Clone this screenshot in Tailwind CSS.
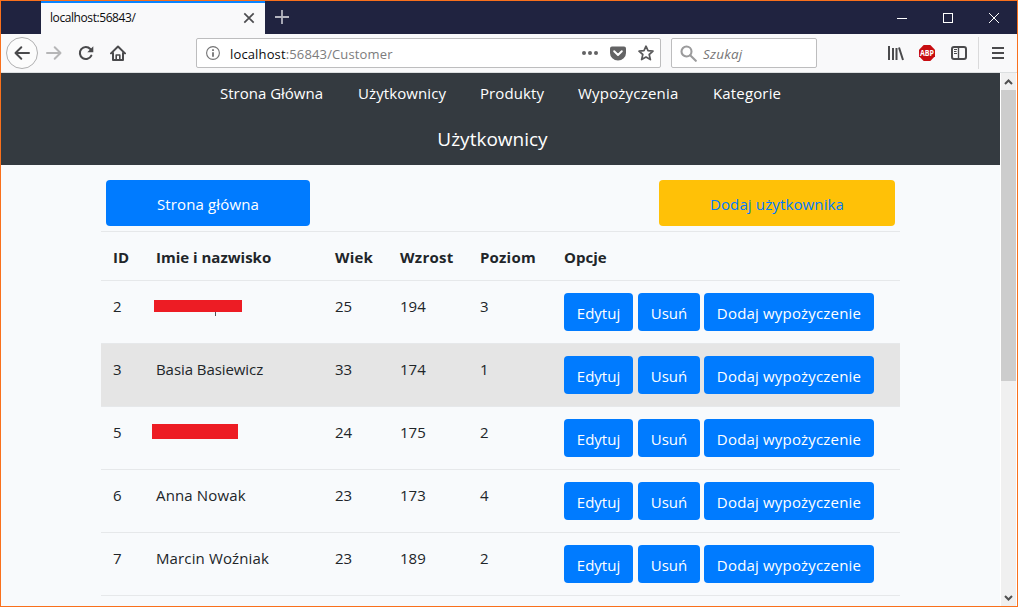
<!DOCTYPE html>
<html lang="pl">
<head>
<meta charset="utf-8">
<title>Użytkownicy</title>
<script src="https://cdn.jsdelivr.net/npm/@tailwindcss/browser@4"></script>
</head>
<body class="w-[1018px] h-[607px] overflow-hidden font-['Open_Sans',sans-serif]">
<div class="w-[1018px] h-[607px] border border-[#f9701c] flex flex-col overflow-hidden bg-[#f8fafc]">
  <!-- title bar -->
  <div class="h-[33px] shrink-0 bg-[#202340] flex">
    <div class="ml-[40px] w-[224px] h-full bg-[#f9f9fa] border-t-2 border-[#0a84ff] flex items-center pl-[9px] pr-[10px] justify-between">
      <span class="-mt-px text-[12px] tracking-[-0.42px] leading-4 text-[#0c0c0d] whitespace-nowrap">localhost:56843/</span>
      <svg class="-mt-px" width="12" height="12" viewBox="0 0 12 12" fill="none" stroke="#4c4c4f" stroke-width="1.7"><path d="M1.3 1.3l9.4 9.4M10.7 1.3l-9.4 9.4"/></svg>
    </div>
    <svg class="ml-[10px] mt-[9px]" width="14" height="14" viewBox="0 0 14 14" stroke="#b4b5c0" stroke-width="1.8"><path d="M7 0v14M0 7h14"/></svg>
    <div class="ml-auto flex items-start gap-[36px] pt-[12px] pr-[18px]">
      <svg width="10" height="10" stroke="#fff" shape-rendering="crispEdges"><path d="M0 5.5h10"/></svg>
      <svg width="10" height="10" fill="none" stroke="#fff" shape-rendering="crispEdges"><path d="M.5.5h9v9h-9z"/></svg>
      <svg width="10" height="10" fill="none" stroke="#fff"><path d="M0 0l10 10M10 0L0 10"/></svg>
    </div>
  </div>
  <!-- toolbar -->
  <div class="h-[39px] shrink-0 bg-[#f9f9fa] border-b border-[#dcdfe0] flex items-center">
    <div class="ml-[5px] size-8 rounded-full border border-[#b0b0b1] bg-[#fcfcfc] flex items-center justify-center">
      <svg width="16" height="16" viewBox="0 0 16 16" fill="none" stroke="#4a4a4c" stroke-width="2" stroke-linecap="round" stroke-linejoin="round"><path d="M15 8H1.6M7.3 2.3L1.5 8l5.8 5.7"/></svg>
    </div>
    <svg class="ml-[8px]" width="16" height="16" viewBox="0 0 16 16" fill="none" stroke="#b6b6b7" stroke-width="2" stroke-linecap="round" stroke-linejoin="round"><path d="M1 8h13.4M8.7 2.3L14.5 8l-5.8 5.7"/></svg>
    <svg class="ml-[16px]" width="16" height="16" viewBox="0 0 16 16" fill="none" stroke="#4a4a4c" stroke-width="2.1" stroke-linecap="round"><path d="M13.3 10.6A6 6 0 1 1 12.3 4"/><path d="M15.3 1.2v6H9.3z" fill="#4a4a4c" stroke="none"/></svg>
    <svg class="ml-[16px]" width="16" height="16" viewBox="0 0 16 16" fill="none" stroke="#4a4a4c" stroke-width="2" stroke-linecap="round" stroke-linejoin="round"><path d="M1 8.4L8 1.5l7 6.9"/><path d="M3 8v7h10V8"/><path d="M6.2 15v-5h3.6v5" stroke-width="1.6"/></svg>
    <div class="ml-[70px] w-[465px] h-[30px] bg-white border border-[#bdbdbe] rounded-[2px] flex items-center">
      <svg class="ml-[9px]" width="14" height="14" viewBox="0 0 14 14" fill="none" stroke="#737374"><circle cx="7" cy="7" r="6.4" stroke-width="1.1"/><path d="M7 6.2v4.500M7 3.200v1.700" stroke-width="1.800"/></svg>
      <span class="ml-[10px] text-[13px] tracking-[0.14px] leading-5 text-[#7c7c7d] whitespace-nowrap mt-[2px]"><span class="text-[#0c0c0d]">localhost</span>:56843/Customer</span>
      <svg class="ml-auto" width="16" height="4" viewBox="0 0 16 4" fill="#636364"><circle cx="2" cy="2" r="2"/><circle cx="8" cy="2" r="2"/><circle cx="14" cy="2" r="2"/></svg>
      <svg class="ml-[12px]" width="16" height="15" viewBox="0 0 16 15"><path d="M2 .5h12a2 2 0 0 1 2 2V7A8 7.500 0 0 1 0 7V2.500a2 2 0 0 1 2-2z" fill="#636364"/><path d="M4.200 5.300L8 8.900l3.800-3.600" fill="none" stroke="#fff" stroke-width="2" stroke-linecap="round" stroke-linejoin="round"/></svg>
      <svg class="ml-[12px] mr-[6px]" width="16" height="16" viewBox="0 0 16 16" fill="none" stroke="#59595a" stroke-width="1.700" stroke-linejoin="round"><path d="M8 1.200l2 4.500 5 .5-3.800 3.300 1.200 5.100L8 12l-4.400 2.600 1.200-5.100L1 6.200l5-.5z"/></svg>
    </div>
    <div class="ml-[10px] w-[146px] h-[30px] bg-white border border-[#bdbdbe] rounded-[2px] flex items-center">
      <svg class="ml-[8px]" width="17" height="17" viewBox="0 0 17 17" fill="none" stroke="#9b9b9c" stroke-width="2.100"><circle cx="6.500" cy="6.500" r="5"/><path d="M10.200 10.200l5.600 5.600" stroke-linecap="round"/></svg>
      <span class="ml-[6px] mt-px text-[13.5px] tracking-[0.2px] leading-5 italic text-[#757576]">Szukaj</span>
    </div>
    <svg class="ml-[71px]" width="16" height="16" viewBox="0 0 16 16" fill="none" stroke="#4a4a4c" stroke-width="2"><path d="M1 1v14M5 3v12M8.500 3v12M11 2.500L15 15"/></svg>
    <svg class="ml-[15px]" width="16" height="16" viewBox="0 0 16 16"><path d="M4.700 0h6.600L16 4.700v6.600L11.300 16H4.700L0 11.300V4.700z" fill="#c70d11"/><text x="8" y="10.900" text-anchor="middle" textLength="14" lengthAdjust="spacingAndGlyphs" font-family="Open Sans" font-weight="700" font-size="8" fill="#fff">ABP</text></svg>
    <svg class="ml-[16px]" width="16" height="14" viewBox="0 0 16 14" fill="none" stroke="#4a4a4c"><rect x="1" y="1" width="14" height="12" rx="2" stroke-width="2"/><path d="M7.500 1v12" stroke-width="1.400"/><path d="M3 3.500h3M3 5.500h2.500M3 7.500h3" stroke-width="1"/></svg>
    <div class="ml-[11px] w-px h-8 bg-[#dadadb]"></div>
    <svg class="ml-[13px]" width="12" height="12" viewBox="0 0 12 12" stroke="#4a4a4c" stroke-width="2"><path d="M0 1h12M0 6h12M0 11h12"/></svg>
  </div>
  <!-- viewport -->
  <div class="flex-1 min-h-0 flex">
    <div class="w-[999px] overflow-hidden">
      <header class="h-[92px] bg-[#343a40] text-white">
        <nav class="h-[43px] flex text-[15px] leading-[40px] whitespace-nowrap pl-[219px]">
          <a class="w-[138px]">Strona Główna</a><a class="w-[122px] tracking-[0.1px]">Użytkownicy</a><a class="w-[98px] tracking-[0.1px]">Produkty</a><a class="w-[135px] tracking-[0.2px]">Wypożyczenia</a><a class="tracking-[0.15px]">Kategorie</a>
        </nav>
        <h1 class="text-center text-[19px] leading-[46px] pr-[16px]">Użytkownicy</h1>
      </header>
      <main class="ml-[100px] w-[799px] pt-[15px]">
        <div class="flex justify-between px-[5px] pb-[5px] text-[15px] tracking-[0.13px] leading-[48px] text-center">
          <a class="w-[204px] h-[46px] rounded bg-[#007bff] text-white">Strona główna</a>
          <a class="w-[236px] h-[46px] rounded bg-[#ffc107] text-[#007bff]">Dodaj użytkownika</a>
        </div>
        <table class="w-[799px] table-fixed border-separate border-spacing-0 border-b border-[#e6e8ea] text-[15px] leading-6 text-[#212529] whitespace-nowrap [&_th]:text-left [&_th]:font-bold [&_th]:border-t [&_td]:border-t [&_th]:border-[#e6e8ea] [&_td]:border-[#e6e8ea] [&_td]:h-[63px] [&_th]:h-[49px] [&_th]:pt-[2px] [&_th]:pl-3 [&_td]:pl-3 [&_td]:pt-3 [&_td]:pb-0 [&_td]:align-top [&_th]:align-middle">
          <colgroup><col class="w-[43px]"><col class="w-[179px]"><col class="w-[65px]"><col class="w-[80px]"><col class="w-[84px]"><col class="w-[348px]"></colgroup>
          <thead><tr><th>ID</th><th>Imie i nazwisko</th><th class="tracking-[0.2px]">Wiek</th><th class="tracking-[0.3px]">Wzrost</th><th class="tracking-[0.2px]">Poziom</th><th>Opcje</th></tr></thead>
          <tbody id="rows"></tbody>
        </table>
      </main>
    </div>
    <div class="w-[17px] bg-[#f0f0f0] border-x border-white flex flex-col items-center">
      <svg class="mt-[6px] shrink-0" width="9" height="6" viewBox="0 0 9 6" fill="none" stroke="#505050" stroke-width="2"><path d="M1 5l3.500-3.500L8 5"/></svg>
      <div class="mt-[5px] w-full h-[291px] shrink-0 bg-[#cdcdcd]"></div>
      <svg class="mt-auto mb-[5px] shrink-0" width="9" height="6" viewBox="0 0 9 6" fill="none" stroke="#505050" stroke-width="2"><path d="M1 1l3.500 3.500L8 1"/></svg>
    </div>
  </div>
</div>
<script>
const rows = [
  [2, '<div class="relative w-[88px] h-3 -ml-[2px] mt-[7px] bg-[#ed1c24]"><i class="absolute left-[61px] top-3 w-px h-1 bg-[#50565a]"></i></div>', 25, 194, 3],
  [3, '<span class="tracking-[-0.07px]">Basia Basiewicz</span>', 33, 174, 1],
  [5, '<div class="w-[86px] h-[15px] -ml-[4px] mt-[5px] bg-[#ed1c24]"></div>', 24, 175, 2],
  [6, '<span class="tracking-[0.15px]">Anna Nowak</span>', 23, 173, 4],
  [7, '<span class="tracking-[0.13px]">Marcin Woźniak</span>', 23, 189, 2]
];
const btn = (w, t) => `<a class="${w} h-[38px] rounded bg-[#007bff] text-white text-center leading-[40px]">${t}</a>`;
document.getElementById('rows').innerHTML = rows.map((r, i) =>
  `<tr class="${i === 1 ? 'bg-[#e5e5e5]' : ''}">` + r.map(c => `<td><div class="${String(c).startsWith('<div') ? '' : 'pt-px'}">${c}</div></td>`).join('') +
  `<td><div class="flex">${btn('w-[69px] mr-[5px]', 'Edytuj')}${btn('w-[62px] mr-[4px]', 'Usuń')}${btn('w-[170px] tracking-[0.18px]', 'Dodaj wypożyczenie')}</div></td></tr>`).join('');
</script>
</body>
</html>
